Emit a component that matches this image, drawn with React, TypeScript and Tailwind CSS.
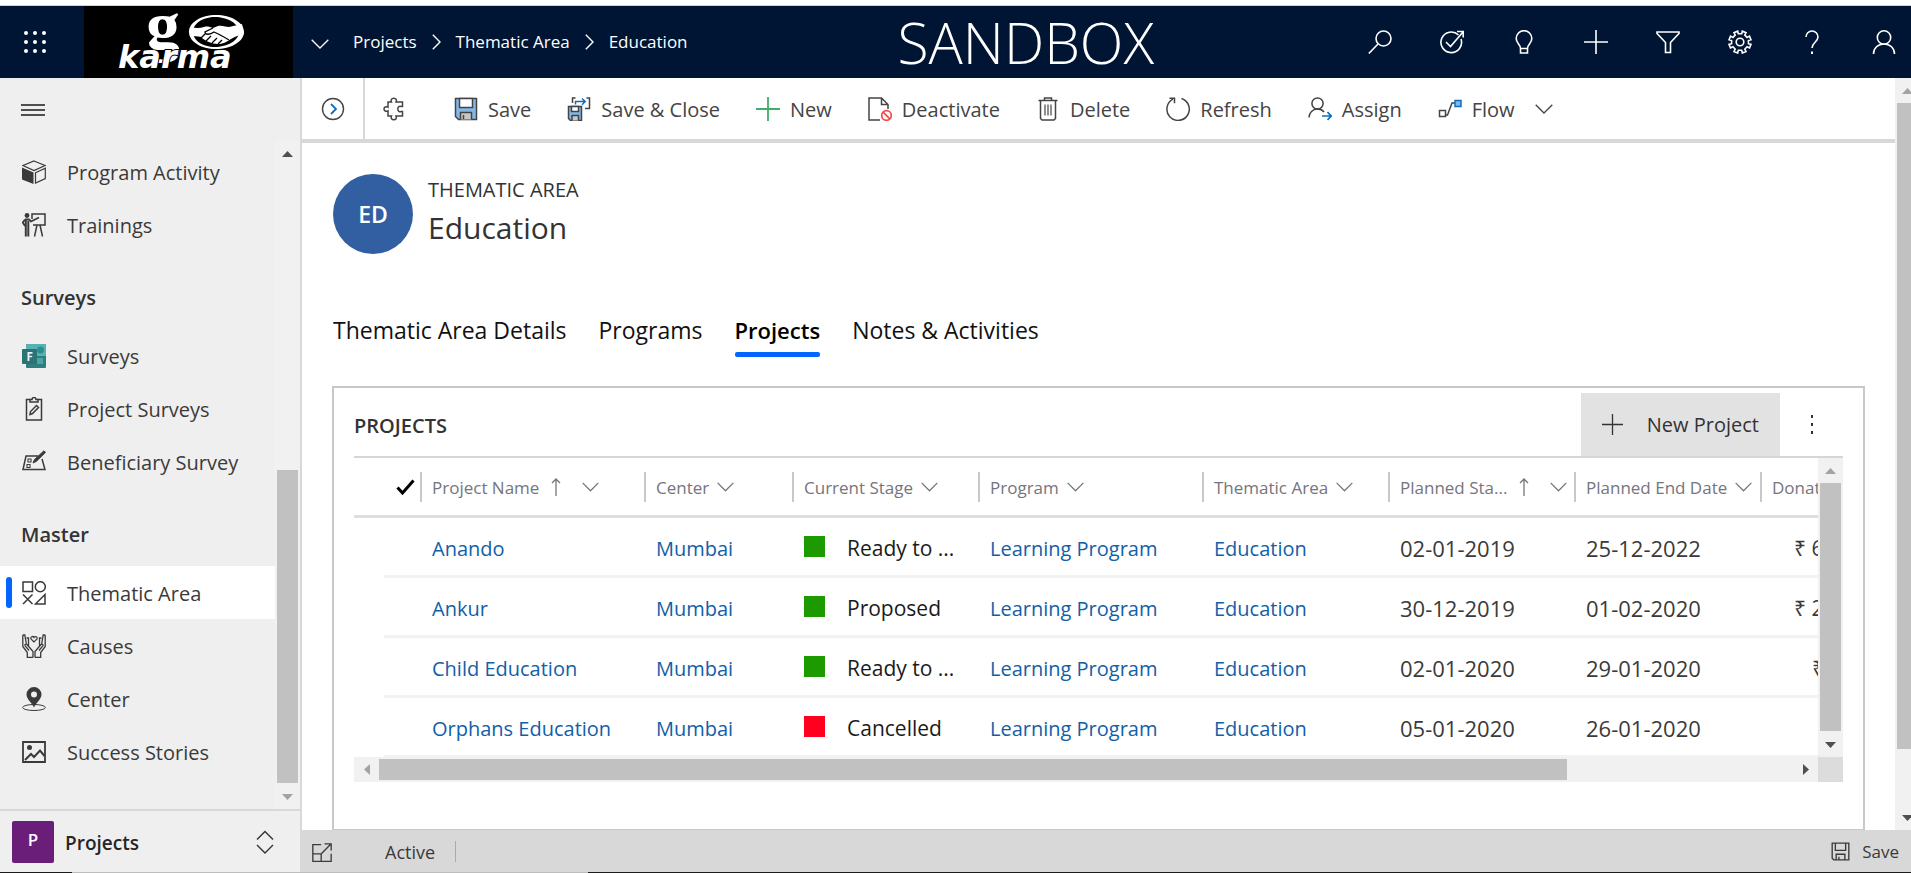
import type { ReactNode } from "react";

type IconProps = { className?: string; children: ReactNode; sw?: number };

function Icon({ className = "size-6", children, sw = 1.5 }: IconProps) {
  return (
    <svg
      className={`${className} shrink-0`}
      viewBox="0 0 24 24"
      fill="none"
      stroke="currentColor"
      strokeWidth={sw}
      aria-hidden="true"
    >
      {children}
    </svg>
  );
}

function Chevron({ className = "w-[18px] h-[10px]" }: { className?: string }) {
  return (
    <svg className={`${className} shrink-0`} viewBox="0 0 18 10" fill="none" stroke="currentColor" strokeWidth="1.3" aria-hidden="true">
      <path d="M.7.7 9 9 17.300.7" />
    </svg>
  );
}

function Crumb() {
  return (
    <svg className="h-4 w-[9px] shrink-0" viewBox="0 0 9 16" fill="none" stroke="currentColor" strokeWidth="1.4" aria-hidden="true">
      <path d="m.8.8 7.200 7.200-7.200 7.200" />
    </svg>
  );
}

function SortArrow() {
  return (
    <svg className="h-[18px] w-[10px] shrink-0" viewBox="0 0 10 18" fill="none" stroke="currentColor" strokeWidth="1.3" aria-hidden="true">
      <path d="M5 18V1M1 5l4-4 4 4" />
    </svg>
  );
}

/* ---------- scroll bars ---------- */

function Tri({ dir, active }: { dir: "up" | "down" | "left" | "right"; active?: boolean }) {
  const points = {
    up: "0,6 11,6 5.500,0",
    down: "0,0 11,0 5.500,6",
    left: "6,0 6,11 0,5.500",
    right: "0,0 0,11 6,5.500",
  }[dir];
  const vertical = dir === "up" || dir === "down";
  return (
    <svg
      className={vertical ? "h-[6px] w-[11px]" : "h-[11px] w-[6px]"}
      viewBox={vertical ? "0 0 11 6" : "0 0 6 11"}
      fill={active ? "#505050" : "#a3a3a3"}
      aria-hidden="true"
    >
      <polygon points={points} />
    </svg>
  );
}

type VBarProps = { before: string; thumb: string; up?: boolean; down?: boolean };

function VBar({ before, thumb, up, down }: VBarProps) {
  return (
    <div className="flex h-full w-[25px] shrink-0 flex-col items-center bg-[#f1f1f1]" aria-hidden="true">
      <div className="flex h-[25px] shrink-0 items-center justify-center">
        <Tri dir="up" active={up} />
      </div>
      <div className={before} />
      <div className={`${thumb} w-[21px] bg-[#c1c1c1]`} />
      <div className="flex-1" />
      <div className="flex h-[25px] shrink-0 items-center justify-center">
        <Tri dir="down" active={down} />
      </div>
    </div>
  );
}

/* ---------- header ---------- */

function Logo() {
  return (
    <svg className="h-[72px] w-[209px] shrink-0 bg-black" viewBox="0 0 209 72" fill="#fff" role="img" aria-label="go karma">
      {/* ring with a handshake */}
      <path
        d="M132 9c15 0 28 7.500 28 17s-13 17-28 17-27-7.500-27-17 12-17 27-17zm-1 2c-12 0-22 6.500-22 15s10 15 22 15 24-6.500 24-15-12-15-24-15z"
        fillRule="evenodd"
      />
      <path d="M106 21c5 1 9 1.500 14 0 3-1 6 0 9 1l5-2c4-1 8 1 11 1l13-3 2 10c-6 1-9 3-13 5-4 3-9 5-13 5-6 0-13-3-17-7-3-1-8-1-11-1z" />
      <path
        d="m129 22-8 4c0 3 5 3 9 0 5 2 10 5 15 8M117 32l4-4M122 35l5-5M128 37l5-5M134 38l4-4"
        fill="none"
        stroke="#000"
        strokeWidth="1.3"
      />
      <text x="62" y="43" fontFamily="Liberation Serif, serif" fontWeight="bold" fontSize="68">g</text>
      <text
        x="34"
        y="62"
        fontFamily="DejaVu Sans, sans-serif"
        fontWeight="bold"
        fontStyle="italic"
        fontSize="32"
        stroke="#000"
        strokeWidth="2"
        paintOrder="stroke"
      >
        karma
      </text>
    </svg>
  );
}

const headerActions: { label: string; icon: ReactNode }[] = [
  { label: "Search", icon: <><circle cx="15.500" cy="8.500" r="7.500" /><path d="M10 14 .8 23.500" /></> },
  { label: "Tasks", icon: <><path d="M18.500 5A10.300 10.300 0 1 0 21 9M6 12l4.500 4.500L23 2M17 1.500h6.200v6" /></> },
  { label: "Insights", icon: <><path d="M8.500 18.500c0-4-4.300-5-4.300-10a7.800 7.800 0 0 1 15.600 0c0 5-4.300 6-4.300 10zM8.500 18.500V23h7v-4.500" /></> },
  { label: "Add", icon: <path d="M12 0v24M0 12h24" /> },
  { label: "Filter", icon: <path d="M1 2h22v1.500l-8.500 9V22.500h-5V12.500L1 3.500z" /> },
  { label: "Settings", icon: <><circle cx="12" cy="12" r="3.800" /><path d="m9.700 1.200.6 2.600h3.400l.6-2.600 3.700 1.500-1.200 2.400 2.300 2.300 2.400-1.300 1.500 3.700-2.600.7v3.200l2.600.7-1.500 3.600-2.400-1.200-2.300 2.300 1.200 2.400-3.700 1.500-.6-2.700h-3.400l-.6 2.700L6 21.500l1.200-2.400-2.300-2.300L2.500 18 1 14.400l2.600-.7v-3.200L1 9.800l1.500-3.700 2.400 1.300 2.300-2.300L6 2.700z" /></> },
  { label: "Help", icon: <><path d="M6 7a6 6 0 0 1 12 0c0 5-6 5.500-6 11" /><path d="M12 21.500V24" strokeWidth="2" /></> },
  { label: "Account", icon: <><circle cx="12" cy="7.500" r="6.700" /><path d="M1.500 24c0-6 4.500-10 10.500-10s10.500 4 10.500 10" /></> },
];

function Header() {
  return (
    <header className="flex h-[72px] shrink-0 items-center bg-[#001433] text-[17px] text-white">
      <button type="button" aria-label="App launcher" className="flex w-[84px] shrink-0 items-center pl-6">
        <svg className="size-[22px]" viewBox="0 0 22 22" fill="#fff" aria-hidden="true">
          {[2, 11, 20].map((y) => [2, 11, 20].map((x) => <circle key={`${x}-${y}`} cx={x} cy={y} r="2" />))}
        </svg>
      </button>
      <Logo />
      <button type="button" aria-label="Switch app" className="flex w-[60px] shrink-0 items-center pt-1 pl-[18px]">
        <Chevron />
      </button>
      <nav aria-label="Breadcrumb" className="flex shrink-0 items-center gap-[15px] pr-5">
        <a href="#projects">Projects</a>
        <Crumb />
        <a href="#thematic-area">Thematic Area</a>
        <Crumb />
        <a href="#education">Education</a>
      </nav>
      <div className="flex-1 text-center text-[57px] leading-[72px] font-light">SANDBOX</div>
      <div className="-mr-[9px] flex shrink-0">
        {headerActions.map((a) => (
          <button key={a.label} type="button" aria-label={a.label} className="flex w-[72px] justify-center">
            <Icon sw={1.6}>{a.icon}</Icon>
          </button>
        ))}
      </div>
    </header>
  );
}

/* ---------- side bar ---------- */

const navGroups: { title?: string; items: { label: string; icon: ReactNode; active?: boolean }[] }[] = [
  {
    items: [
      {
        label: "Program Activity",
        icon: <><path d="M12 1 23 5.500 12 10.500 1 5.500z" strokeWidth="1.200" /><path d="M0 7.500 11.500 12.500V24L0 19.500z" fill="currentColor" stroke="none" /><path d="M13.500 12.800 23.300 8.300V18.500L13.500 23z" strokeWidth="1.200" /></>,
      },
      {
        label: "Trainings",
        icon: <><circle cx="5" cy="2.500" r="2.400" fill="currentColor" stroke="none" /><path d="M3 6.500h4l2 2 8-4M3 6.500.8 9.500 3 13" strokeWidth="1.800" /><path d="M3.800 7v16.500M6.300 8v15.500" strokeWidth="2" /><path d="M10 6V1h13v11H11M15 12l-2.500 11.500M18 12l2.500 11.500" /></>,
      },
    ],
  },
  {
    title: "Surveys",
    items: [
      {
        label: "Surveys",
        icon: (
          <g stroke="none">
            <rect x="4" y="0" width="20" height="24" rx="1" fill="#2f7f80" />
            <rect x="4" y="0" width="20" height="12" rx="1" fill="#55b3b5" />
            <circle cx="18.500" cy="6" r="3.500" fill="#2f8c8d" />
            <rect x="15" y="14" width="6" height="6" fill="#4aa5a7" />
            <rect x="0" y="5" width="15" height="15" rx="1" fill="#2b7374" />
            <path d="M5.500 17V8h5v1.700H7.400v2h2.800v1.600H7.400V17z" fill="#e8f4f4" />
          </g>
        ),
      },
      {
        label: "Project Surveys",
        icon: <><path d="M8 2.500H4.500V23h15V2.500H16" /><path d="M8 5V2.500h2a2 2 0 0 1 4 0h2V5z" /><path d="m8 17.500.5-3L14.500 8.500l2 2-6 6z" /></>,
      },
      {
        label: "Beneficiary Survey",
        icon: <><path d="M16 6H4L1 19.500h22L20 9" /><path d="M6 9h3v3H6zM5 14.500h3v3H5z" strokeWidth="1.100" /><path d="m11 13 1.500-3.500L22 .8l1.500 1.500-9 9z" fill="currentColor" strokeWidth="1" /></>,
      },
    ],
  },
  {
    title: "Master",
    items: [
      {
        label: "Thematic Area",
        active: true,
        icon: <><path d="M1 1h9.500v9.500H1zM1 13.500l9.500 9.500M10.500 13.500 1 23M23 13.500V23h-9.500z" /><circle cx="18.300" cy="5.700" r="5" /></>,
      },
      {
        label: "Causes",
        icon: <><path d="M11 23.500v-6L5 10.500c-1-1-2.500 0-1.800 1.300L7 16.500M.8 1v11.500l4.500 6v5H11M.8 1h2l1.500 8.500M4.500 4h2v8" strokeWidth="1.300" /><path d="M13 23.500v-6l6-7c1-1 2.500 0 1.800 1.300L17 16.500M23.200 1v11.500l-4.500 6v5H13M23.200 1h-2l-1.500 8.500M19.500 4h-2v8" strokeWidth="1.300" /><path d="m12 8-3-3c-1-2 2-3.500 3-1.500 1-2 4-.5 3 1.500z" strokeWidth="1.200" /></>,
      },
      {
        label: "Center",
        icon: <><ellipse cx="12" cy="20.500" rx="11.400" ry="3" strokeWidth="1" /><path d="M12 20.500C10 16 4.500 12 4.500 7.500a7.500 7.500 0 0 1 15 0C19.500 12 14 16 12 20.500zM12 4.500a3 3 0 1 0 0 6 3 3 0 0 0 0-6z" fill="currentColor" fillRule="evenodd" stroke="none" /></>,
      },
      {
        label: "Success Stories",
        icon: <><path d="M1 2h22v20H1z" strokeWidth="1.800" /><circle cx="7.500" cy="7.500" r="2.500" fill="currentColor" stroke="none" /><path d="m3 20 6-6 3 3 6-6.500L22.500 16" strokeWidth="2" /></>,
      },
    ],
  },
];

function Sidebar() {
  return (
    <aside className="flex w-[302px] shrink-0 flex-col border-r-2 border-[#d8d8d8] bg-[#efefef] text-[#3b3a39]">
      <div className="flex h-[63px] shrink-0 items-center px-[21px]">
        <button type="button" aria-label="Toggle navigation" className="flex text-[#1b1b1b]">
          <Icon sw={1.4}><path d="M0 7h24M0 12h24M0 17h24" /></Icon>
        </button>
      </div>
      <div className="flex min-h-0 flex-1">
        <nav aria-label="Site map" className="min-w-0 flex-1 overflow-hidden pt-1 text-[20px]">
          {navGroups.map((g, i) => (
            <section key={i}>
              {g.title && (
                <h2 className="flex h-[78px] items-center pt-4 pl-[21px] text-[20px] font-semibold text-[#333]">{g.title}</h2>
              )}
              <ul>
                {g.items.map((it) => (
                  <li key={it.label}>
                    <a
                      href="#nav"
                      aria-current={it.active ? "page" : undefined}
                      className={`relative flex h-[53px] items-center gap-[21px] pl-[22px] ${it.active ? "bg-white" : ""}`}
                    >
                      {it.active && <span className="absolute top-[11px] left-[6px] h-[31px] w-[6px] rounded-full bg-[#0066ff]" />}
                      <Icon>{it.icon}</Icon>
                      <span className="pt-[2px]">{it.label}</span>
                    </a>
                  </li>
                ))}
              </ul>
            </section>
          ))}
        </nav>
        <VBar before="flex-[305]" thumb="h-[313px]" up />
      </div>
      <button type="button" className="flex h-[63px] shrink-0 items-center border-t-2 border-[#d8d8d8] pl-3 text-left">
        <span className="flex size-[42px] items-center justify-center rounded-[2px] bg-[#6b1d7a] pb-1 text-[17px] font-semibold text-white">P</span>
        <span className="flex-1 pt-1 pl-[11px] text-[19px] font-semibold text-[#262626]">Projects</span>
        <svg className="mr-[26px] h-[24px] w-[18px]" viewBox="0 0 18 24" fill="none" stroke="#333" strokeWidth="1.4" aria-hidden="true">
          <path d="M1 9.500 9 1.500l8 8M1 15l8 8 8-8" />
        </svg>
      </button>
    </aside>
  );
}

/* ---------- command bar ---------- */

const floppy = (
  <>
    <path d="M1.500 1.500h21v21h-18l-3-3z" fill="#83b9e8" />
    <path d="M5.500 1.500h13v9h-13z" fill="#fff" />
    <path d="M6.500 22.500v-7h11v7" fill="#c8c8c8" />
    <path d="M9.500 18v4" />
  </>
);

const commands: { label: string; icon: ReactNode; menu?: boolean }[] = [
  { label: "Save", icon: floppy },
  {
    label: "Save & Close",
    icon: <><path d="M1.500 9.500h13v14h-11l-2-2z" fill="#83b9e8" /><path d="M4.500 9.500h7v5h-7z" fill="#fff" /><path d="M5 23.500V18.500h6.500v5" fill="#c8c8c8" /><path d="M8.500 1h-3v5M19.500 1h3v10.500H18" /><path d="M8.500 7.500V4.500h9.500M15 1.500l3.200 3L15 7.700" stroke="#106ebe" /></>,
  },
  { label: "New", icon: <path d="M12 0v24M0 12h24" stroke="#3fae6a" strokeWidth="1.800" /> },
  {
    label: "Deactivate",
    icon: <><path d="M12 23H1V1h12.500l6.500 6.500V12M13.500 1v6.500H20" /><circle cx="18.500" cy="18.500" r="4.800" stroke="#f04a4a" strokeWidth="1.700" /><path d="m15.200 15.200 6.600 6.600" stroke="#f04a4a" strokeWidth="1.700" /></>,
  },
  { label: "Delete", icon: <><path d="M2.500 3.500h19M8.500 3.500V1h7v2.500M4.500 3.500V21.500L6 23h12l1.500-1.500V3.500" /><path d="M9 7.500v11M12 7.500v11M15 7.500v11" strokeWidth="1.200" /></> },
  { label: "Refresh", icon: <path d="M15.500 1.500A11.200 11.200 0 1 1 7 2.200M3.500 1.200h5v5" /> },
  {
    label: "Assign",
    icon: <><circle cx="9.500" cy="6.500" r="5.600" /><path d="M1 20.500c0-5 3.800-8.400 8.500-8.400 2.600 0 5 1 6.600 3" /><path d="M14 19h9M19.500 15.200l3.700 3.800-3.700 3.800" stroke="#106ebe" strokeWidth="1.700" /></>,
  },
  {
    label: "Flow",
    menu: true,
    icon: <><path d="M1.500 13.500h6v6h-6zM7.500 18h2L14 6h3" /><path d="M17 3.500h6v6h-6z" fill="#83b9e8" stroke="#106ebe" /></>,
  },
];

function CommandBar() {
  return (
    <div role="toolbar" aria-label="Commands" className="flex h-[65px] shrink-0 items-stretch border-b-4 border-[#d8d8d8] text-[20px] text-[#444]">
      <button type="button" aria-label="Open record set" className="flex w-[63px] shrink-0 items-center justify-center border-r-2 border-[#d8d8d8]">
        <Icon sw={1.4}><circle cx="12" cy="12" r="10.500" /><path d="m10 7 5 5-5 5" stroke="#106ebe" strokeWidth="1.800" /></Icon>
      </button>
      <button type="button" aria-label="Extensions" className="flex w-[58px] shrink-0 items-center justify-center">
        <Icon><path d="M6 5h3.500c-1-2 0-3.800 2.300-3.800S15 3 14 5h6.500v4.500h-1.300c-1.800-.8-3.400.3-3.400 2.500s1.600 3.300 3.400 2.500h1.300V19H14c1 2 0 3.800-2.200 3.800S8.500 21 9.500 19H6v-5.200C4 14.800 2 14 2 12s2-2.800 4-1.800z" /></Icon>
      </button>
      <div className="flex items-center gap-9 pl-[31px]">
        {commands.map((c) => (
          <button key={c.label} type="button" className="flex shrink-0 items-center gap-[10px]">
            <Icon>{c.icon}</Icon>
            <span className="pt-[2px]">{c.label}</span>
            {c.menu && <span className="pl-[10px]"><Chevron /></span>}
          </button>
        ))}
      </div>
    </div>
  );
}

/* ---------- projects grid ---------- */

const columns = [
  { label: "Project Name", sorted: true, width: "w-[224px]" },
  { label: "Center", width: "w-[148px]" },
  { label: "Current Stage", width: "w-[186px]" },
  { label: "Program", width: "w-[224px]" },
  { label: "Thematic Area", width: "w-[186px]" },
  { label: "Planned Sta...", sorted: true, width: "w-[186px]" },
  { label: "Planned End Date", width: "w-[186px]" },
  { label: "Donations", width: "w-[148px]" },
];

const rows = [
  { name: "Anando", stage: "Ready to ...", color: "bg-[#1c9a00]", start: "02-01-2019", end: "25-12-2022", amount: "₹ 6", pad: "pl-[34px]" },
  { name: "Ankur", stage: "Proposed", color: "bg-[#1c9a00]", start: "30-12-2019", end: "01-02-2020", amount: "₹ 2", pad: "pl-[34px]" },
  { name: "Child Education", stage: "Ready to ...", color: "bg-[#1c9a00]", start: "02-01-2020", end: "29-01-2020", amount: "₹", pad: "pl-[52px]" },
  { name: "Orphans Education", stage: "Cancelled", color: "bg-[#ff001f]", start: "05-01-2020", end: "26-01-2020", amount: "", pad: "pl-[52px]" },
];

function LinkCell({ children }: { children: ReactNode }) {
  return (
    <td className="border-b-[3px] border-[#f2f2f2] pt-1 pl-3 text-[#1160a8]">
      <a href="#record">{children}</a>
    </td>
  );
}

function ProjectsTable() {
  return (
    <table className="w-[1554px] table-fixed border-separate border-spacing-0 text-left text-[20px] whitespace-nowrap">
      <colgroup>
        <col className="w-[30px]" />
        <col className="w-[36px]" />
        {columns.map((c) => <col key={c.label} className={c.width} />)}
      </colgroup>
      <thead>
        <tr className="h-[60px] text-[17px] text-[#75757c]">
          <th className="border-b-[3px] border-[#dedede]" />
          <th className="border-b-[3px] border-[#dedede]" aria-label="Selected">
            <svg className="ml-3 h-[16px] w-[19px]" viewBox="0 0 19 16" fill="none" stroke="#000" strokeWidth="3" aria-hidden="true">
              <path d="m1.500 8.500 5 5.500L17.500 1.500" />
            </svg>
          </th>
          {columns.map((c) => (
            <th key={c.label} className="border-b-[3px] border-[#dedede] p-0 font-normal">
              <div className="flex h-[30px] items-center border-l-2 border-[#c8c8c8] pl-[10px]">
                <span className="pt-[2px]">{c.label}</span>
                {c.sorted && <span className="pr-[13px] pl-3"><SortArrow /></span>}
                <span className="pl-2"><Chevron className="h-[10px] w-[17px]" /></span>
              </div>
            </th>
          ))}
        </tr>
      </thead>
      <tbody>
        {rows.map((r) => (
          <tr key={r.name} className="h-[60px]">
            <td />
            <td className="border-b-[3px] border-[#f2f2f2]" />
            <LinkCell>{r.name}</LinkCell>
            <LinkCell>Mumbai</LinkCell>
            <td className="border-b-[3px] border-[#f2f2f2] p-0 pl-3 text-[21px] text-[#1b1b1b]">
              <div className="flex items-center gap-[22px]">
                <span className={`size-[21px] shrink-0 ${r.color}`} />
                <span className="pt-1">{r.stage}</span>
              </div>
            </td>
            <LinkCell>Learning Program</LinkCell>
            <LinkCell>Education</LinkCell>
            <td className="border-b-[3px] border-[#f2f2f2] pt-1 pl-3 text-[22px] text-[#3b3a39]">{r.start}</td>
            <td className="border-b-[3px] border-[#f2f2f2] pt-1 pl-3 text-[22px] text-[#3b3a39]">{r.end}</td>
            <td className={`border-b-[3px] border-[#f2f2f2] pt-1 text-[21px] text-[#3b3a39] ${r.pad}`}>{r.amount}</td>
          </tr>
        ))}
      </tbody>
    </table>
  );
}

function ProjectsPanel() {
  return (
    <section aria-label="Projects" className="mt-[29px] flex-1 border-2 border-b border-[#c8c8c8] px-5">
      <div className="flex h-[70px] items-end border-b-2 border-[#d5d5d5]">
        <h3 className="flex h-[63px] flex-1 items-center pt-[2px] text-[20px] font-semibold text-[#333]">PROJECTS</h3>
        <button type="button" className="flex h-[63px] items-center gap-6 bg-[#e2e2e2] px-[21px] text-[20px] text-[#333]">
          <Icon className="size-[21px]"><path d="M12 0v24M0 12h24" /></Icon>
          <span>New Project</span>
        </button>
        <button type="button" aria-label="More commands" className="flex h-[63px] w-[63px] items-center justify-center">
          <svg className="h-[20px] w-[2px]" viewBox="0 0 2 20" fill="#333" aria-hidden="true">
            <path d="M0 0h2v3H0zM0 8h2v3H0zM0 16h2v3H0z" />
          </svg>
        </button>
      </div>
      <div className="flex h-[299px]">
        <div className="min-w-0 flex-1 overflow-hidden">
          <ProjectsTable />
        </div>
        <VBar before="h-0" thumb="h-[248px]" down />
      </div>
      <div className="flex h-[25px] bg-[#f1f1f1]" aria-hidden="true">
        <div className="flex flex-1 items-center">
          <div className="flex w-[25px] justify-center"><Tri dir="left" /></div>
          <div className="h-[21px] flex-[1188] bg-[#c1c1c1]" />
          <div className="flex-[226]" />
          <div className="flex w-[25px] justify-center"><Tri dir="right" active /></div>
        </div>
        <div className="w-[25px] bg-[#dcdcdc]" />
      </div>
    </section>
  );
}

/* ---------- record form ---------- */

const tabs = ["Thematic Area Details", "Programs", "Projects", "Notes & Activities"];

function RecordForm() {
  return (
    <div className="flex min-h-0 flex-1 flex-col px-[30px] pt-[31px]">
      <div className="flex shrink-0 gap-[15px] pl-px">
        <div className="flex size-20 items-center justify-center rounded-full bg-[#315fa2] text-[23px] font-semibold text-white">ED</div>
        <div className="pt-[2px] text-[#333]">
          <p className="text-[20px] leading-7">THEMATIC AREA</p>
          <h1 className="text-[30px] leading-[48px]">Education</h1>
        </div>
      </div>
      <div role="tablist" className="mt-[60px] flex shrink-0 gap-8 pl-px text-[23px] leading-8 text-[#111]">
        {tabs.map((t) => (
          <button
            key={t}
            type="button"
            role="tab"
            aria-selected={t === "Projects"}
            className={
              t === "Projects"
                ? "relative pb-[11px] text-[22px] font-semibold text-black"
                : "pb-[11px]"
            }
          >
            {t}
            {t === "Projects" && <span className="absolute inset-x-0 bottom-0 h-[5px] rounded-[2px] bg-[#0066ff]" />}
          </button>
        ))}
      </div>
      <ProjectsPanel />
    </div>
  );
}

function StatusBar() {
  return (
    <footer className="flex h-[42px] shrink-0 items-center bg-[#d8d8d8] pr-3 pl-[10px] text-[#3b3a39]">
      <button type="button" aria-label="Pop out" className="mt-1">
        <Icon className="size-5" sw={1.6}><path d="M11 2H1v20h22V13M15 1h8v8M23 1 11.500 12.500M1 13h10v9" /></Icon>
      </button>
      <span className="pt-[2px] pl-[53px] text-[18px]">Active</span>
      <span className="ml-[20px] h-[21px] w-px bg-[#ababab]" />
      <button type="button" className="ml-auto flex items-center gap-3 text-[17px]">
        <Icon className="size-[19px]" sw={1.7}><path d="M1.500 1.500h21v21h-19l-2-2zM5.500 1.500v9h13v-9M6.500 22.500v-7h11v7M10 18.500v4" /></Icon>
        <span className="pt-[2px]">Save</span>
      </button>
    </footer>
  );
}

export default function App() {
  return (
    <div className="flex h-screen flex-col overflow-hidden bg-white font-['Open_Sans','Noto_Sans',sans-serif]">
      <div className="h-[6px] shrink-0 border-b border-[#c3dadb]" />
      <Header />
      <div className="flex min-h-0 flex-1">
        <Sidebar />
        <main className="flex min-w-0 flex-1 flex-col">
          <div className="flex min-h-0 flex-1">
            <div className="flex min-w-0 flex-1 flex-col">
              <CommandBar />
              <RecordForm />
            </div>
            <div className="w-4 shrink-0 overflow-hidden">
              <VBar before="h-0" thumb="h-[646px]" down />
            </div>
          </div>
          <StatusBar />
        </main>
      </div>
      <div className="flex h-px shrink-0">
        <div className="w-[72px] bg-[#1b1b1b]" />
        <div className="w-[516px] bg-[#bdbdbd]" />
        <div className="flex-1 bg-[#1b1b1b]" />
      </div>
    </div>
  );
}
